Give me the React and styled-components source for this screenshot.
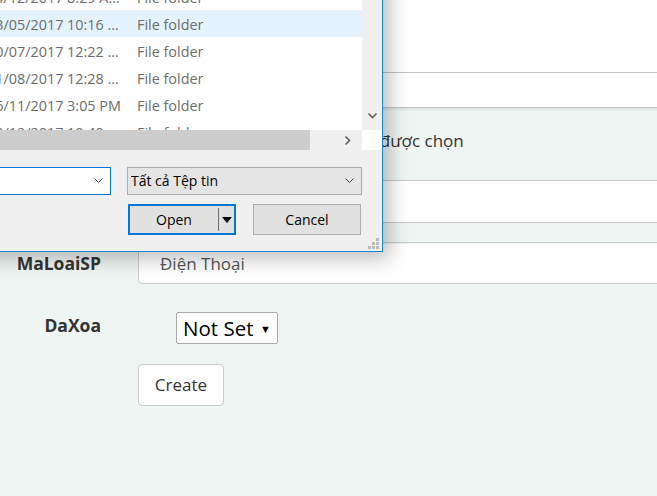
import styled, { createGlobalStyle } from 'styled-components';

const GlobalStyle = createGlobalStyle`
	html, body {
		margin: 0;
		padding: 0;
		overflow: hidden;
		background: #eff5f2;
	}
	body {
		font-family: "Open Sans", "Noto Sans", sans-serif;
	}
`;

const Page = styled.div`
	position: relative;
	width: 657px;
	height: 496px;
	overflow: hidden;
	background: #eff5f2;
`;

const Form = styled.div`
	display: flex;
	flex-direction: column;
`;

const FormRow = styled.div`
	display: grid;
	grid-template-columns: 138px 560px;
	align-items: center;
	margin-top: ${(p) => p.$mt || 0}px;
`;

const Label = styled.label`
	text-align: right;
	padding-right: 37px;
	padding-bottom: ${(p) => p.$lift || 0}px;
	font-size: 17.5px;
	font-weight: 700;
	color: #333;
`;

const Field = styled.div`
	box-sizing: border-box;
	height: ${(p) => p.$h}px;
	background: #fff;
	border-top: ${(p) => (p.$top ? '1px solid #c8c8c8' : 'none')};
	border-bottom: 1px solid #c4c4c4;
`;

const FileField = styled.div`
	height: 72px;
	box-sizing: border-box;
	padding-bottom: 8px;
	display: flex;
	align-items: center;
	box-shadow: inset 0 2px 2px rgba(0, 0, 0, 0.07);
	font-size: 17px;
	color: #333;
`;

const FileButton = styled.span`
	width: 90px;
	margin-right: 9px;
`;

const TextInput = styled.div`
	box-sizing: border-box;
	height: 42px;
	display: flex;
	align-items: center;
	padding-left: 21px;
	background: #fff;
	border: 1px solid #ccc;
	border-radius: 4px;
	box-shadow: inset 0 1px 1px rgba(0, 0, 0, 0.075);
	font-size: 17px;
	color: #555;
`;

const SelectBox = styled.div`
	box-sizing: border-box;
	width: 102px;
	height: 32px;
	margin-left: 38px;
	display: flex;
	align-items: center;
	justify-content: space-between;
	padding: 0 6px 0 6px;
	background: #fff;
	border: 1px solid #a9a9a9;
	border-radius: 2px;
	font-size: 20.5px;
	color: #000;

	span {
		font-size: 11px;
	}
`;

const CreateButton = styled.button`
	box-sizing: border-box;
	width: 86px;
	height: 42px;
	padding: 0 0 2px;
	background: #fff;
	border: 1px solid #ccc;
	border-radius: 4px;
	font-family: inherit;
	font-size: 17px;
	color: #333;
`;

/* ---- open file dialog ---- */

const Dialog = styled.div`
	position: absolute;
	left: -417px;
	top: -300px;
	width: 800px;
	height: 552px;
	box-sizing: border-box;
	border: 1px solid #1883d7;
	background: #f0f0f0;
	box-shadow: 3px 3px 18px 4px rgba(0, 0, 0, 0.25);
	display: flex;
	flex-direction: column;
	font-family: "Open Sans", "Noto Sans", sans-serif;
	font-size: 14px;
`;

const ListPane = styled.div`
	flex: 1;
	min-height: 0;
	display: grid;
	grid-template-columns: 1fr 20px;
`;

const FileList = styled.div`
	background: #fff;
	overflow: hidden;
	padding-top: 282px;
	font-size: 14.4px;
`;

const FileRow = styled.div`
	height: 27px;
	box-sizing: border-box;
	padding-top: 2px;
	display: grid;
	grid-template-columns: 1fr 150px 225px;
	align-items: center;
	white-space: nowrap;
	color: #6d6d6d;
	background: ${(p) => (p.$selected ? '#e5f3ff' : 'transparent')};
`;

const Cell = styled.span`
	overflow: hidden;
`;

const VScroll = styled.div`
	background: #f0f0f0;
	display: flex;
	flex-direction: column;
	justify-content: flex-end;
	align-items: center;
	padding-bottom: 9px;
`;

const HScrollRow = styled.div`
	height: 20px;
	display: grid;
	grid-template-columns: 1fr 20px;
`;

const HTrack = styled.div`
	background: #f0f0f0;
	display: flex;
	align-items: center;
`;

const HThumb = styled.div`
	width: 726px;
	height: 100%;
	background: #cdcdcd;
`;

const ArrowSlot = styled.div`
	flex: 1;
	display: flex;
	justify-content: flex-end;
	padding-right: 9px;
`;

const Corner = styled.div`
	background: #fff;
`;

const Footer = styled.div`
	position: relative;
	height: 101px;
	box-sizing: border-box;
	padding: 17px 20px 0 0;
	display: flex;
	flex-direction: column;
	align-items: flex-end;
	gap: 9px;
`;

const ComboRow = styled.div`
	display: flex;
	gap: 16px;
`;

const Combo = styled.div`
	box-sizing: border-box;
	width: ${(p) => p.$w}px;
	height: 28px;
	display: flex;
	align-items: center;
	justify-content: space-between;
	padding: 0 6px 1px 3px;
	background: ${(p) => (p.$focused ? '#fff' : '#e5e5e5')};
	border: 1px solid ${(p) => (p.$focused ? '#0078d7' : '#acacac')};
	color: #000;
`;

const ButtonRow = styled.div`
	display: flex;
	gap: 17px;
	padding-right: 1px;
`;

const DialogButton = styled.div`
	box-sizing: border-box;
	width: 108px;
	height: 31px;
	display: flex;
	align-items: stretch;
	background: #e1e1e1;
	border: ${(p) => (p.$primary ? '2px solid #0078d7' : '1px solid #adadad')};
	color: #000;
`;

const ButtonText = styled.span`
	flex: 1;
	display: flex;
	align-items: center;
	justify-content: center;
`;

const SplitPart = styled.span`
	width: 15px;
	display: flex;
	align-items: center;
	justify-content: center;
	border-left: 1px solid #6d6d6d;
	margin: 2px 0;
`;

const Grip = styled.svg`
	position: absolute;
	right: 3px;
	bottom: 2px;
`;

const Chevron = ({ dir = 'down', color = '#606060', w = 1.6 }) => (
	<svg width="11" height="11" viewBox="0 0 11 11">
		<path
			d={dir === 'down' ? 'M1.5 3.5 L5.5 7.5 L9.5 3.5' : 'M3.5 1.5 L7.5 5.5 L3.5 9.5'}
			fill="none"
			stroke={color}
			strokeWidth={w}
		/>
	</svg>
);

const files = [
	{ name: 'Zalo Received Files', date: '14/12/2017 8:29 AM', shown: '14/12/2017 8:29 A…' },
	{ name: 'WebBanHang', date: '23/05/2017 10:16 …', selected: true },
	{ name: 'Visual Studio 2017', date: '10/07/2017 12:22 …' },
	{ name: 'Tài liệu', date: '21/08/2017 12:28 …' },
	{ name: 'Hình ảnh', date: '16/11/2017 3:05 PM' },
	{ name: 'Downloads', date: '20/12/2017 10:40 …' },
];

const App = () => {
	return (
		<Page>
			<GlobalStyle />
			<Form>
				<FormRow>
					<span />
					<Field $h={73} />
				</FormRow>
				<FormRow>
					<span />
					<Field $h={35} />
				</FormRow>
				<FormRow>
					<span />
					<FileField>
						<FileButton>Chọn tệp</FileButton>
						Không có tệp nào được chọn
					</FileField>
				</FormRow>
				<FormRow>
					<span />
					<Field $h={43} $top />
				</FormRow>
				<FormRow $mt={19}>
					<Label>MaLoaiSP</Label>
					<TextInput>Điện Thoại</TextInput>
				</FormRow>
				<FormRow $mt={28}>
					<Label $lift={7}>DaXoa</Label>
					<div>
						<SelectBox>
							Not Set <span>▼</span>
						</SelectBox>
					</div>
				</FormRow>
				<FormRow $mt={20}>
					<span />
					<div>
						<CreateButton>Create</CreateButton>
					</div>
				</FormRow>
			</Form>

			<Dialog>
				<ListPane>
					<FileList>
						{files.map((f) => (
							<FileRow key={f.name} $selected={f.selected}>
								<Cell>{f.name}</Cell>
								<Cell>{f.shown || f.date}</Cell>
								<Cell>File folder</Cell>
							</FileRow>
						))}
					</FileList>
					<VScroll>
						<Chevron dir="down" />
					</VScroll>
				</ListPane>
				<HScrollRow>
					<HTrack>
						<HThumb />
						<ArrowSlot>
							<Chevron dir="right" />
						</ArrowSlot>
					</HTrack>
					<Corner />
				</HScrollRow>
				<Footer>
					<ComboRow>
						<Combo $w={420} $focused>
							<span />
							<Chevron color="#444" w={1} />
						</Combo>
						<Combo $w={235}>
							<span>Tất cả Tệp tin</span>
							<Chevron color="#444" w={1} />
						</Combo>
					</ComboRow>
					<ButtonRow>
						<DialogButton $primary>
							<ButtonText>Open</ButtonText>
							<SplitPart>
								<svg width="10" height="6" viewBox="0 0 10 6">
									<path d="M0 0 H10 L5 6 Z" fill="#000" />
								</svg>
							</SplitPart>
						</DialogButton>
						<DialogButton>
							<ButtonText>Cancel</ButtonText>
						</DialogButton>
					</ButtonRow>
					<Grip width="11" height="11" viewBox="0 0 11 11">
						{[
							[8, 0],
							[4, 4],
							[8, 4],
							[0, 8],
							[4, 8],
							[8, 8],
						].map(([x, y]) => (
							<rect key={`${x}-${y}`} x={x} y={y} width="3" height="3" fill="#bcbcbc" />
						))}
					</Grip>
				</Footer>
			</Dialog>
		</Page>
	);
};

export default App;
